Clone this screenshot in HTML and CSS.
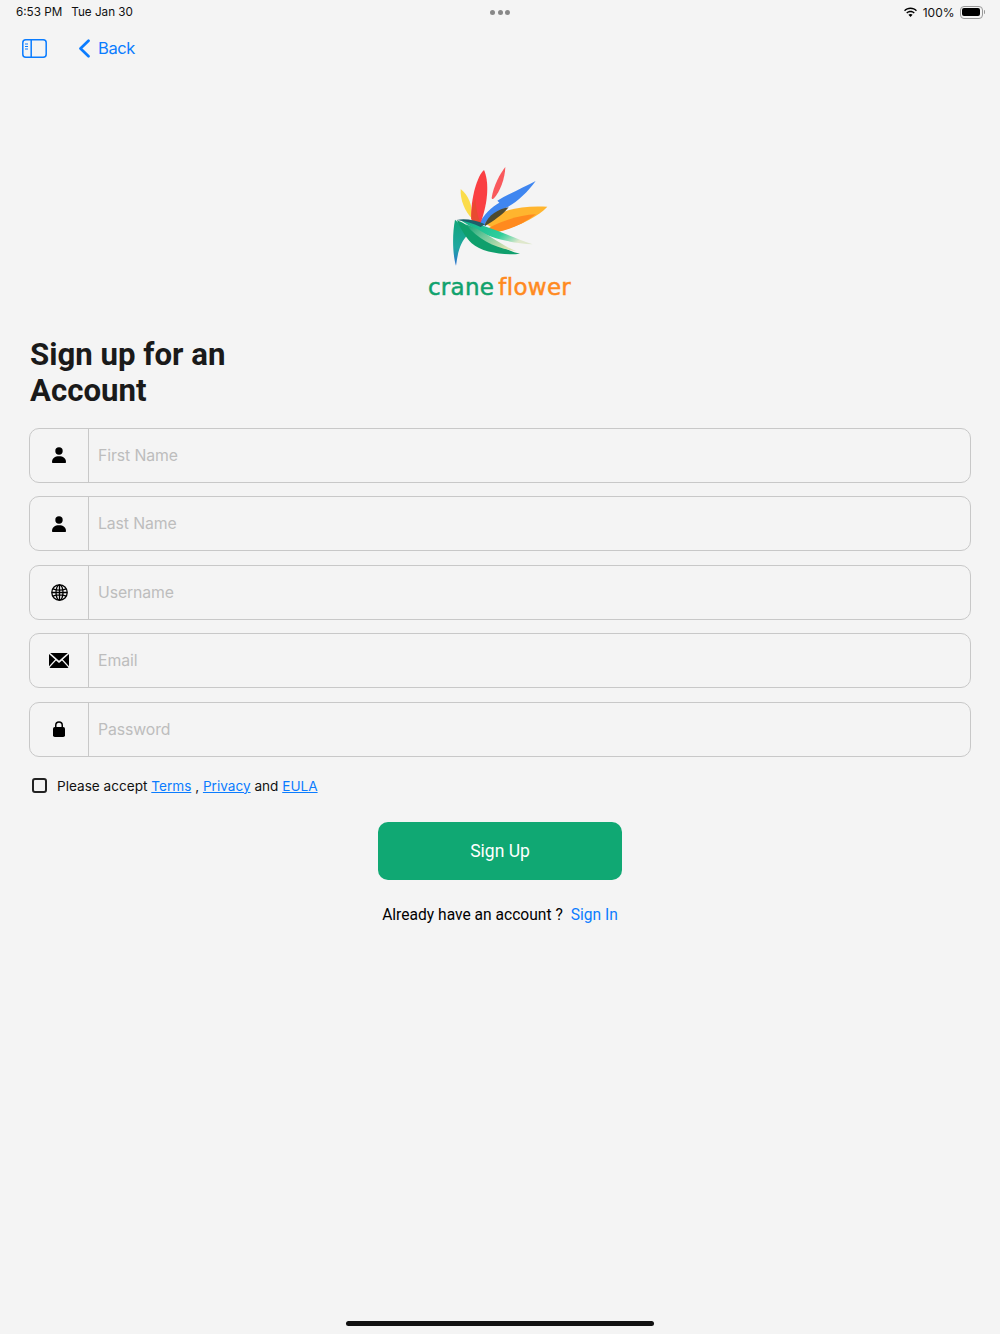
FILE: index.html
```html
<!DOCTYPE html>
<html lang="en">
<head>
    <meta charset="UTF-8">
    <meta name="viewport" content="width=device-width, initial-scale=1.0">
    <title>Sign Up - Crane Flower</title>
    <link rel="stylesheet" href="styles.css">
</head>
<body>
<div class="page">
    <div class="status-bar">
        <div class="status-left">
            <span>6:53 PM</span>
            <span>Tue Jan 30</span>
        </div>
        <div class="status-dots"><i></i><i></i><i></i></div>
        <div class="status-right">
            <svg class="wifi" width="15" height="11" viewBox="0 0 16 12">
                <path d="M8 2.200c2.300 0 4.400.9 6 2.400l1-1.100C13.100 1.700 10.700.6 8 .6S2.900 1.700 1 3.500l1 1.100c1.600-1.500 3.700-2.400 6-2.400z"/>
                <path d="M8 5.600c1.400 0 2.600.5 3.600 1.400l1-1.100C11.300 4.700 9.700 4 8 4s-3.300.7-4.600 1.900l1 1.100c1-.9 2.200-1.400 3.600-1.400z"/>
                <path d="M8 7.500c-.9 0-1.700.3-2.300.9L8 11l2.300-2.600c-.6-.6-1.400-.9-2.300-.9z"/>
            </svg>
            <span>100%</span>
            <div class="battery"><div class="battery-fill"></div></div>
            <div class="battery-tip"></div>
        </div>
    </div>

    <div class="nav-bar">
        <svg class="sidebar-icon" width="25" height="19" viewBox="0 0 25 19" fill="none" stroke="#0a7cff">
            <rect x="0.800" y="0.800" width="23.400" height="17.400" rx="3" stroke-width="1.500"/>
            <path d="M9.200 1v17" stroke-width="1.500"/>
            <path d="M3 5h3M3 7.500h3M3 10h3" stroke-width="1.200"/>
        </svg>
        <a class="back-link" href="#">
            <svg width="13" height="19" viewBox="0 0 13 19" fill="none" stroke="#0a7cff" stroke-width="2.700" stroke-linecap="round" stroke-linejoin="round">
                <path d="M10.500 1.800L2.500 9.500l8 7.700"/>
            </svg>
            <span>Back</span>
        </a>
    </div>

    <div class="logo">
        <svg width="180" height="113" viewBox="0 0 540 339">
            <defs>
                <linearGradient id="stem" x1="0" y1="0" x2="0" y2="1">
                    <stop offset="0" stop-color="#0fa578"/>
                    <stop offset="0.6" stop-color="#1fa7a0"/>
                    <stop offset="1" stop-color="#2a6fd0"/>
                </linearGradient>
                <linearGradient id="pale" x1="0" y1="0" x2="1" y2="0.4">
                    <stop offset="0" stop-color="#0fb08a"/>
                    <stop offset="0.7" stop-color="#2fcf9c"/>
                    <stop offset="1" stop-color="#dfe8cc"/>
                </linearGradient>
                <linearGradient id="leaf" x1="0" y1="0" x2="1" y2="0.6">
                    <stop offset="0" stop-color="#12a274"/>
                    <stop offset="0.45" stop-color="#6cc79a"/>
                    <stop offset="1" stop-color="#dde3b4"/>
                </linearGradient>
            </defs>
            <path d="M152 102C175 120 188 150 187 192C165 170 150 135 152 102Z" fill="#fbdc4a"/>
            <path d="M208 205C222 178 245 155 268 143L262 137C300 115 345 95 377 78C350 115 315 148 280 162L225 212Z" fill="#3f86f0"/>
            <path d="M225 205C260 170 320 150 412 155C380 190 310 218 265 230Z" fill="#ffb52e"/>
            <path d="M235 220C280 195 330 180 378 178C340 207 300 224 262 231Z" fill="#ff8a1e"/>
            <path d="M225 208C235 180 265 162 296 157C280 178 250 198 225 213Z" fill="#4d4a30"/>
            <path d="M184 192C181 130 203 60 222 45C236 75 237 135 212 203C203 206 188 203 184 192Z" fill="#fa3f42"/>
            <path d="M184 192C184 170 188 150 196 130C198 160 203 185 212 203C203 206 188 203 184 192Z" fill="#e84a30"/>
            <path d="M245 128C250 95 270 55 286 36C285 70 270 110 252 130C248 133 245 132 245 128Z" fill="#f9595c"/>
            <path d="M150 195C220 205 300 245 368 268C310 265 240 250 200 225Z" fill="url(#pale)"/>
            <path d="M135 194C126 240 128 300 138 332C144 290 150 262 176 236C162 220 148 205 135 194Z" fill="url(#stem)"/>
            <path d="M140 195C190 215 270 285 330 296C280 302 215 292 185 265C165 245 152 220 140 195Z" fill="#0f9f6c"/>
            <path d="M168 208C220 225 270 270 318 288C265 282 205 258 168 208Z" fill="url(#leaf)"/>
            <path d="M140 195C165 190 195 195 225 208L212 216C190 205 165 198 140 195Z" fill="#1d5f6a"/>
        </svg>
        <div class="logo-text"><span class="crane">crane</span><span class="flower">flower</span></div>
    </div>

    <h1>Sign up for an<br>Account</h1>

    <form class="fields">
        <div class="field">
            <div class="field-icon">
                <svg width="14" height="16" viewBox="0 0 14 16"><circle cx="7" cy="4" r="3.700"/><path d="M0 15.200C0 11.200 3 9.300 7 9.300s7 1.900 7 5.900c0 .5-.3.8-.8.8H.8c-.5 0-.8-.3-.8-.8z"/></svg>
            </div>
            <input type="text" placeholder="First Name">
        </div>
        <div class="field">
            <div class="field-icon">
                <svg width="14" height="16" viewBox="0 0 14 16"><circle cx="7" cy="4" r="3.700"/><path d="M0 15.200C0 11.200 3 9.300 7 9.300s7 1.900 7 5.900c0 .5-.3.8-.8.8H.8c-.5 0-.8-.3-.8-.8z"/></svg>
            </div>
            <input type="text" placeholder="Last Name">
        </div>
        <div class="field">
            <div class="field-icon">
                <svg width="17" height="17" viewBox="0 0 17 17" fill="none" stroke="#000" stroke-width="1.300">
                    <circle cx="8.500" cy="8.500" r="7.700"/>
                    <ellipse cx="8.500" cy="8.500" rx="3.500" ry="7.700"/>
                    <path d="M8.500.8v15.400M1.800 4.800c4 1.500 9.400 1.500 13.400 0M.8 8.500h15.400M1.800 12.200c4-1.500 9.400-1.500 13.400 0"/>
                </svg>
            </div>
            <input type="text" placeholder="Username">
        </div>
        <div class="field">
            <div class="field-icon">
                <svg width="20" height="15" viewBox="0 0 20 15">
                    <path d="M1.200 0h17.600L10 7.800z"/>
                    <path d="M0 1l6.200 5.600L0 13.300zM20 1l-6.200 5.600L20 13.300z"/>
                    <path d="M7 7.400l3 2.600 3-2.600 6.400 7.100c-.2.3-.5.5-.9.5h-17c-.4 0-.7-.2-.9-.5z"/>
                </svg>
            </div>
            <input type="email" placeholder="Email">
        </div>
        <div class="field">
            <div class="field-icon">
                <svg width="12" height="16" viewBox="0 0 12 16">
                    <path d="M2 6.500V4.200a4 4 0 0 1 8 0v2.300H8.500V4.200a2.500 2.500 0 0 0-5 0v2.300z"/>
                    <rect x="0" y="6" width="12" height="10" rx="1.800"/>
                </svg>
            </div>
            <input type="password" placeholder="Password">
        </div>
    </form>

    <label class="accept">
        <input type="checkbox">
        <span>Please accept <a href="#">Terms</a> , <a href="#">Privacy</a> and <a href="#">EULA</a></span>
    </label>

    <button class="btn-signup" type="button">Sign Up</button>

    <p class="signin">Already have an account ? <a href="#">Sign In</a></p>

    <div class="home-bar"></div>
</div>
</body>
</html>
```

FILE: styles.css
```css
body {
    margin: 0;
    background-color: #f4f4f4;
    color: #000;
    font-family: Inter, sans-serif;
}

.page {
    display: flex;
    flex-direction: column;
    height: 1334px;
    padding: 0 29px 8px;
    box-sizing: border-box;
}

.status-bar {
    display: grid;
    grid-template-columns: 1fr auto 1fr;
    align-items: center;
    height: 24px;
    margin: 0 -14px 0 -13px;
    font-size: 12px;
    color: #111;
}

.status-left {
    display: flex;
    gap: 9px;
    font-size: 11.700px;
}

.status-dots {
    display: flex;
    gap: 2.500px;
    margin-left: -1px;
}

.status-dots i {
    width: 5px;
    height: 5px;
    border-radius: 50%;
    background-color: #888;
}

.status-right {
    display: flex;
    justify-content: flex-end;
    align-items: center;
    gap: 5px;
}

.wifi {
    fill: #000;
}

.battery {
    width: 23px;
    height: 13px;
    padding: 1.500px;
    box-sizing: border-box;
    border: 1px solid #999;
    border-radius: 4px;
}

.battery-fill {
    height: 100%;
    background-color: #000;
    border-radius: 2px;
}

.battery-tip {
    width: 1.500px;
    height: 4px;
    margin-left: -4px;
    background-color: #999;
    border-radius: 0 1px 1px 0;
}

.nav-bar {
    display: flex;
    align-items: center;
    height: 48px;
    margin-left: -7px;
}

.back-link {
    display: flex;
    align-items: center;
    gap: 7px;
    margin-left: 31px;
    font-size: 16.500px;
    letter-spacing: -0.400px;
    color: #0a7cff;
    text-decoration: none;
}

.logo {
    display: flex;
    flex-direction: column;
    align-items: center;
    margin-top: 83px;
}

.logo svg {
    display: block;
}

.logo-text {
    display: flex;
    gap: 4px;
    height: 27px;
    margin-top: 4px;
    margin-left: -1px;
    font-family: "DejaVu Sans", sans-serif;
    font-size: 23px;
    letter-spacing: 0.300px;
    line-height: 30px;
    -webkit-text-stroke: 0.500px;
}

.crane {
    color: #10a26d;
}

.flower {
    color: #ff8a1e;
}

h1 {
    margin: 38px 0 0 1px;
    font-family: Roboto, sans-serif;
    font-size: 31.200px;
    font-weight: 700;
    line-height: 36px;
    color: #1a1a1a;
}

.fields {
    display: flex;
    flex-direction: column;
    gap: 13.800px;
    margin-top: 19px;
}

.field {
    display: flex;
    height: 54.700px;
    box-sizing: border-box;
    border: 1px solid #c8c8c8;
    border-radius: 10px;
}

.field-icon {
    display: flex;
    justify-content: center;
    align-items: center;
    flex: 0 0 59px;
    border-right: 1px solid #c8c8c8;
    box-sizing: border-box;
}

.field input {
    flex: 1;
    padding: 0 9px;
    border: none;
    background: transparent;
    font-family: Inter, sans-serif;
    font-size: 15.800px;
    letter-spacing: -0.100px;
    outline: none;
}

.field input::placeholder {
    color: #bdbdbd;
}

.accept {
    display: flex;
    align-items: center;
    gap: 10px;
    margin: 21px 0 0 3px;
    font-size: 13.600px;
    color: #111;
}

.accept input {
    appearance: none;
    width: 15px;
    height: 15px;
    margin: 0;
    border: 2px solid #222;
    border-radius: 3px;
    box-sizing: border-box;
}

.accept a,
.signin a {
    color: #0a7cff;
}

.btn-signup {
    align-self: center;
    width: 244px;
    height: 58px;
    margin-top: 28px;
    border: none;
    border-radius: 10px;
    background-color: #10a873;
    color: white;
    font-family: Roboto, sans-serif;
    font-size: 17.500px;
    cursor: pointer;
}

.signin {
    margin: 25px 0 0 0;
    text-align: center;
    font-family: Roboto, sans-serif;
    font-size: 15.600px;
    line-height: 20px;
}

.signin a {
    margin-left: 4px;
    text-decoration: none;
}

.home-bar {
    align-self: center;
    width: 308px;
    height: 5px;
    margin-top: auto;
    border-radius: 3px;
    background-color: #111;
}
```
